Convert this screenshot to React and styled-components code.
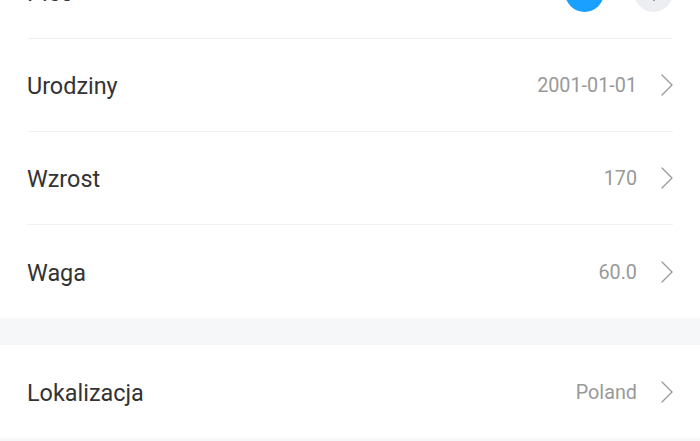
import React from 'react';
import styled, { createGlobalStyle } from 'styled-components';

const GlobalStyle = createGlobalStyle`
  html, body {
    margin: 0;
    padding: 0;
    background: #f6f7f9;
    overflow: hidden;
  }
`;

const Page = styled.div`
  width: 700px;
  margin-top: -54px;
  display: flex;
  flex-direction: column;
`;

const Section = styled.div`
  background: #ffffff;
  padding: 0 27px;
`;

const Gap = styled.div`
  height: 27px;
  background: #f6f7f9;
`;

const Row = styled.div`
  display: flex;
  align-items: center;
  justify-content: space-between;
  border-bottom: ${({ last }) => (last ? 'none' : '1px solid #f1f1f1')};
  height: ${({ last }) => (last ? '93px' : '92px')};
`;

const Label = styled.span`
  font-family: Roboto, 'Liberation Sans', sans-serif;
  font-size: 23.4px;
  color: #333333;
  margin-top: 2px;
`;

const Right = styled.div`
  display: flex;
  align-items: center;
  gap: 24px;
`;

const Value = styled.span`
  font-family: Roboto, 'Liberation Sans', sans-serif;
  font-size: 19.8px;
  color: #999999;
  margin-top: 1px;
`;

const GenderGroup = styled.div`
  display: flex;
  align-items: center;
  gap: 30px;
`;

const GenderButton = styled.div`
  width: 39px;
  height: 39px;
  border-radius: 50%;
  background: ${({ active }) => (active ? '#1aa0ff' : '#eceef1')};
  color: ${({ active }) => (active ? '#ffffff' : '#333333')};
  display: flex;
  align-items: center;
  justify-content: center;
`;

const Chevron = () => (
  <svg width="12" height="22" viewBox="0 0 12 22" fill="none">
    <path d="M1 1 L11 11 L1 21" stroke="#9a9a9a" strokeWidth="1.4" strokeLinecap="round" strokeLinejoin="round" />
  </svg>
);

const MaleIcon = () => (
  <svg width="20" height="20" viewBox="0 0 20 20" fill="none" stroke="currentColor" strokeWidth="2" strokeLinecap="round">
    <circle cx="8" cy="12" r="5" />
    <path d="M12 8 L17 3 M12.5 3 H17 V7.5" />
  </svg>
);

const FemaleIcon = () => (
  <svg width="20" height="20" viewBox="0 0 20 20" fill="none" stroke="currentColor" strokeWidth="1.6" strokeLinecap="round">
    <circle cx="10" cy="7" r="4.5" />
    <path d="M10 11.5 V18 M7 15 H13" />
  </svg>
);

const items = [
  { label: 'Urodziny', value: '2001-01-01' },
  { label: 'Wzrost', value: '170' },
  { label: 'Waga', value: '60.0', last: true },
];

export default function App() {
  return (
    <>
      <GlobalStyle />
      <Page>
        <Section>
          <Row>
            <Label>Płeć</Label>
            <GenderGroup>
              <GenderButton active>
                <MaleIcon />
              </GenderButton>
              <GenderButton>
                <FemaleIcon />
              </GenderButton>
            </GenderGroup>
          </Row>
          {items.map((item) => (
            <Row key={item.label} last={item.last}>
              <Label>{item.label}</Label>
              <Right>
                <Value>{item.value}</Value>
                <Chevron />
              </Right>
            </Row>
          ))}
        </Section>
        <Gap />
        <Section>
          <Row last>
            <Label>Lokalizacja</Label>
            <Right>
              <Value>Poland</Value>
              <Chevron />
            </Right>
          </Row>
        </Section>
      </Page>
    </>
  );
}
